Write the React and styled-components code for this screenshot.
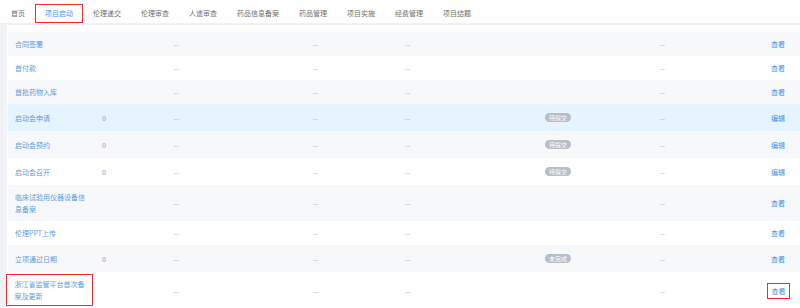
import React from "react";
import styled, { createGlobalStyle } from "styled-components";

const GlobalStyle = createGlobalStyle`
  html, body {
    margin: 0;
    padding: 0;
    background: #f0f2f5;
    font-family: "Noto Sans CJK SC", "Noto Sans", sans-serif;
    overflow: hidden;
  }
`;

const tabs = [
  "首页",
  "项目启动",
  "伦理递交",
  "伦理审查",
  "人遗审查",
  "药品信息备案",
  "药品管理",
  "项目实施",
  "经费管理",
  "项目结题",
];

const rows = [
  { name: "合同签署", action: "查看" },
  { name: "首付款", action: "查看" },
  { name: "首批药物入库", action: "查看" },
  { name: "启动会申请", num: "0", status: "待提交", action: "编辑", hover: true },
  { name: "启动会预约", num: "0", status: "待提交", action: "编辑" },
  { name: "启动会召开", num: "0", status: "待提交", action: "编辑" },
  { name: "临床试验用仪器设备信息备案", action: "查看" },
  { name: "伦理PPT上传", action: "查看" },
  { name: "立项通过日期", num: "0", status: "未完成", action: "查看" },
  { name: "浙江省监管平台首次备案及更新", action: "查看", marked: true },
];

const widths = [87, 72, 139, 92, 140, 115, 111, 36];

export default function App() {
  return (
    <Page>
      <GlobalStyle />
      <TabBar>
        {tabs.map((t, i) => (
          <Tab key={t} $active={i === 1}>
            {t}
          </Tab>
        ))}
      </TabBar>
      <Card>
        <Table>
          <colgroup>
            {widths.map((w, i) => (
              <col key={i} style={{ width: w }} />
            ))}
          </colgroup>
          <tbody>
            {rows.map((r, i) => (
              <Row key={r.name} $striped={i % 2 === 0} $hover={r.hover}>
                <Cell>
                  {r.marked ? <Marked>{r.name}</Marked> : <Name>{r.name}</Name>}
                </Cell>
                <Cell>
                  <Num>{r.num}</Num>
                </Cell>
                <Cell>
                  <Dash>--</Dash>
                </Cell>
                <Cell>
                  <Dash>--</Dash>
                </Cell>
                <Cell>
                  <Dash>--</Dash>
                </Cell>
                <Cell>{r.status && <Badge>{r.status}</Badge>}</Cell>
                <Cell>
                  <Dash>--</Dash>
                </Cell>
                <Cell>
                  <Action $marked={r.marked}>{r.action}</Action>
                </Cell>
              </Row>
            ))}
          </tbody>
        </Table>
      </Card>
    </Page>
  );
}

const Page = styled.div`
  width: 800px;
  height: 308px;
  overflow: hidden;
  background: #f0f2f5;
`;

const TabBar = styled.div`
  display: flex;
  align-items: center;
  height: 23px;
  padding-left: 1px;
  background: #fff;
`;

const Tab = styled.div`
  display: flex;
  align-items: center;
  height: 19px;
  box-sizing: border-box;
  padding: 0 9px;
  font-size: 7px;
  color: ${(p) => (p.$active ? "#4a94e2" : "#707070")};
  border: 1.5px solid ${(p) => (p.$active ? "#e8312f" : "transparent")};
  margin-top: 3px;
`;

const Card = styled.div`
  margin: 2px 0 0 7px;
  padding: 7px 0 0 1px;
  background: #fff;
`;

const Table = styled.table`
  width: 792px;
  table-layout: fixed;
  border-collapse: collapse;
  font-size: 7px;
`;

const Row = styled.tr`
  background: ${(p) => (p.$hover ? "#e6f4fe" : p.$striped ? "#f7f8fa" : "#fff")};
`;

const Cell = styled.td`
  padding: 6px 7px;
  line-height: 12px;
  vertical-align: middle;
  text-align: left;
`;

const Name = styled.span`
  color: #629cdc;
`;

const Marked = styled.div`
  color: #629cdc;
  border: 1.5px solid #e8312f;
  margin: -4px -5px -2px -9px;
  padding: 3px 4px 3px 7.5px;
`;

const Num = styled.span`
  color: #7097cc;
`;

const Dash = styled.span`
  color: #adadad;
`;

const Badge = styled.span`
  display: inline-block;
  vertical-align: middle;
  margin: 3px 0;
  padding: 0 4px;
  line-height: 9px;
  border-radius: 5px;
  font-size: 6px;
  color: #fff;
  background: #b6bec8;
`;

const Action = styled.span`
  display: inline-block;
  color: #4490e0;
  ${(p) =>
    p.$marked &&
    `
    border: 1.5px solid #e8312f;
    margin: -2px -4px;
    padding: 1px 3px 1px 3.5px;
  `}
`;
